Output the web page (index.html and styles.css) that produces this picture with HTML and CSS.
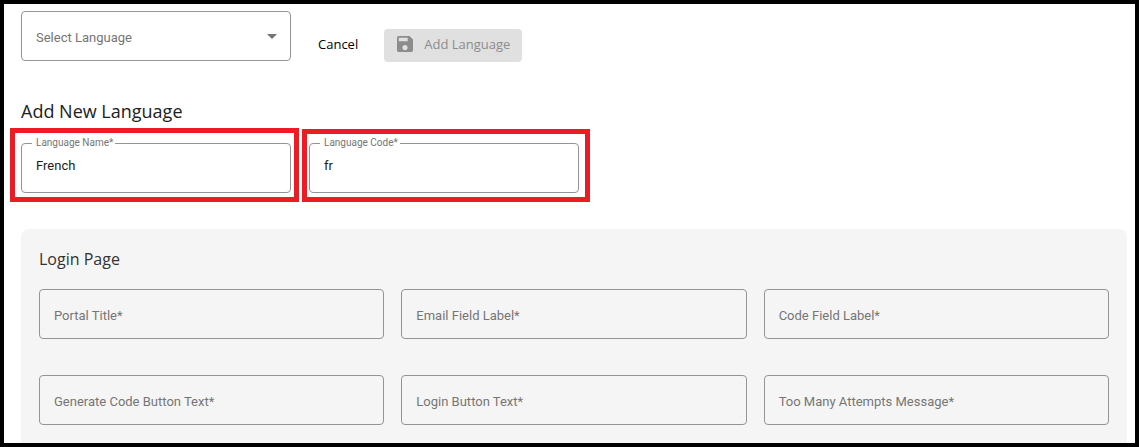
FILE: index.html
```html
<!DOCTYPE html>
<html lang="en">
<head>
    <meta charset="UTF-8">
    <meta name="viewport" content="width=device-width, initial-scale=1.0">
    <title>Add New Language</title>
    <link rel="stylesheet" href="styles.css">
</head>
<body>

    <form class="page">
        <div class="toolbar">
            <div class="field field-small">
                <select id="language" name="language">
                    <option value=""></option>
                </select>
                <label for="language">Select Language</label>
                <svg class="arrow" viewBox="0 0 10 5" aria-hidden="true"><path d="M0 0h10L5 5z"/></svg>
            </div>
            <div class="actions">
                <button type="button" class="btn-cancel">Cancel</button>
                <button type="submit" class="btn-add" disabled>
                    <svg viewBox="3 3 18 18" aria-hidden="true"><path d="M17 3H5c-1.11 0-2 .9-2 2v14c0 1.1.89 2 2 2h14c1.1 0 2-.9 2-2V7l-4-4zm-5 16c-1.66 0-3-1.34-3-3s1.34-3 3-3 3 1.34 3 3-1.34 3-3 3zm3-10H5V5h10v4z"/></svg>
                    Add Language
                </button>
            </div>
        </div>

        <h2>Add New Language</h2>
        <div class="new-language">
            <div class="field field-small filled highlight">
                <input type="text" id="language_name" name="language_name" value="French">
                <label for="language_name">Language Name*</label>
            </div>
            <div class="field field-small filled highlight highlight-code">
                <input type="text" id="language_code" name="language_code" value="fr">
                <label for="language_code">Language Code*</label>
            </div>
        </div>

        <section class="panel">
            <h3>Login Page</h3>
            <div class="panel-grid">
                <div class="field">
                    <input type="text" id="portal_title" name="portal_title">
                    <label for="portal_title">Portal Title*</label>
                </div>
                <div class="field">
                    <input type="text" id="email_label" name="email_label">
                    <label for="email_label">Email Field Label*</label>
                </div>
                <div class="field">
                    <input type="text" id="code_label" name="code_label">
                    <label for="code_label">Code Field Label*</label>
                </div>
                <div class="field">
                    <input type="text" id="generate_text" name="generate_text">
                    <label for="generate_text">Generate Code Button Text*</label>
                </div>
                <div class="field">
                    <input type="text" id="login_text" name="login_text">
                    <label for="login_text">Login Button Text*</label>
                </div>
                <div class="field">
                    <input type="text" id="attempts_message" name="attempts_message">
                    <label for="attempts_message">Too Many Attempts Message*</label>
                </div>
            </div>
        </section>
    </form>

</body>
</html>
```
FILE: styles.css
```css
* {
    margin: 0;
    padding: 0;
    box-sizing: border-box;
}

body {
    background: white;
    color: #212121;
    font-family: "Open Sans", sans-serif;
}

.page {
    display: flex;
    flex-direction: column;
    min-height: 100vh;
    border: 4px solid black;
    padding: 7px 8px 0 17px;
}

.toolbar {
    display: flex;
    align-items: flex-start;
    gap: 16px;
}

.actions {
    display: flex;
    gap: 16px;
    padding-top: 18px;
}

h2 {
    margin: 37px 0 20px;
    font-size: 18px;
    font-weight: 400;
    line-height: 24px;
}

h3 {
    margin-bottom: 18px;
    color: #333;
    font-size: 16px;
    font-weight: 400;
    line-height: 24px;
}

.new-language {
    display: flex;
    gap: 18px;
}

/* Fields */
.field {
    position: relative;
    height: 50px;
}

.field-small {
    width: 270px;
}

.field input, .field select {
    display: block;
    width: 100%;
    height: 100%;
    padding: 0 14px 6px;
    border: 1px solid #949494;
    border-radius: 4px;
    outline: none;
    background: transparent;
    color: #212121;
    font-family: Roboto, sans-serif;
    font-size: 13px;
    appearance: none;
}

.field input:focus, .field select:focus {
    border-color: #424242;
}

.field label {
    position: absolute;
    top: 17px;
    left: 15px;
    color: #757575;
    font-family: Roboto, sans-serif;
    font-size: 13px;
    line-height: 20px;
    pointer-events: none;
}

.field.filled label {
    top: -7px;
    left: 11px;
    padding: 0 2px 0 4px;
    background: white;
    font-size: 10px;
    line-height: 14px;
}

.arrow {
    position: absolute;
    top: 23px;
    right: 14px;
    width: 10px;
    height: 5px;
    fill: #757575;
    pointer-events: none;
}

/* Red frames around the fields to fill in */
.highlight::before {
    content: "";
    position: absolute;
    inset: -15px -8px -9px -11px;
    border: 5px solid #ed1c24;
    pointer-events: none;
}

.highlight-code::before {
    inset: -14px -11px -9px -7px;
}

/* Buttons */
button {
    height: 33px;
    border: none;
    border-radius: 4px;
    font-family: "Open Sans", sans-serif;
    font-size: 13px;
}

.btn-cancel {
    padding: 0 10px 3px 11px;
    background: transparent;
    color: black;
    cursor: pointer;
}

.btn-add {
    display: flex;
    align-items: center;
    gap: 11px;
    padding: 0 12px 3px 13px;
    background: #e0e0e0;
    color: #8c8c8c;
}

.btn-add svg {
    width: 16px;
    height: 16px;
    fill: #8c8c8c;
}

.panel {
    flex: 1;
    margin-top: 36px;
    padding: 18px;
    border-radius: 8px 8px 0 0;
    background: #f5f5f5;
}

.panel-grid {
    display: grid;
    grid-template-columns: repeat(3, 1fr);
    gap: 36px 17px;
}
```
